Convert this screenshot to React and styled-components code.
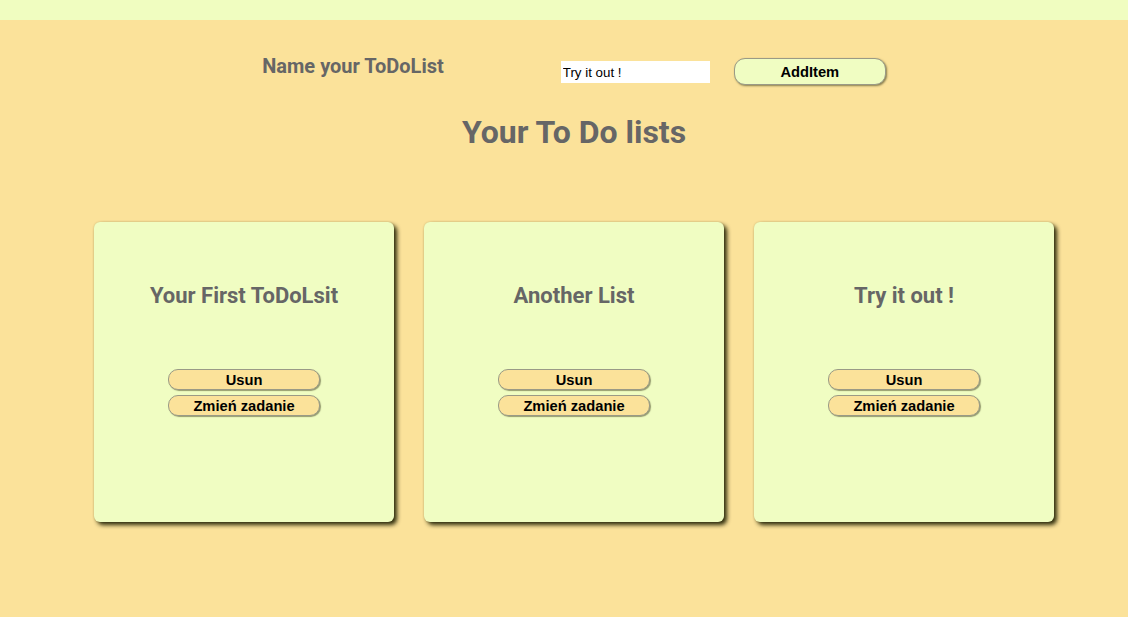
import styled, { createGlobalStyle } from 'styled-components';

const lists = ['Your First ToDoLsit', 'Another List', 'Try it out !'];

export default function App() {
  return (
    <Page>
      <GlobalStyle />
      <TopBar />
      <Main>
        <Header>
          <NameLabel>Name your ToDoList</NameLabel>
          <NameInput defaultValue="Try it out !" />
          <AddButton>AddItem</AddButton>
        </Header>
        <Title>Your To Do lists</Title>
        <Cards>
          {lists.map((name) => (
            <Card key={name}>
              <CardTitle>{name}</CardTitle>
              <CardActions>
                <SmallButton>Usun</SmallButton>
                <SmallButton>Zmień zadanie</SmallButton>
              </CardActions>
            </Card>
          ))}
        </Cards>
      </Main>
    </Page>
  );
}

const GlobalStyle = createGlobalStyle`
  html, body {
    margin: 0;
    padding: 0;
    background: #fbe29a;
  }
  body {
    font-family: Roboto, "Liberation Sans", sans-serif;
  }
`;

const Page = styled.div`
  width: 100%;
  min-height: 617px;
  background: #fbe29a;
`;
const TopBar = styled.div`
  height: 20px;
  background: #f0fdc0;
`;
const Main = styled.div`
  display: flex;
  flex-direction: column;
  align-items: center;
  padding-left: 20px;
`;
const Header = styled.div`
  display: flex;
  align-items: flex-start;
  margin-top: 38px;
`;
const NameLabel = styled.h3`
  margin: 0;
  margin-top: -1px;
  font-family: Roboto, sans-serif;
  font-weight: 700;
  font-size: 20px;
  line-height: 19px;
  color: #666666;
  margin-right: 117px;
`;
const NameInput = styled.input`
  width: 149px;
  height: 22px;
  box-sizing: border-box;
  margin-top: 3px;
  padding: 0 2px;
  border: none;
  outline: none;
  background: #ffffff;
  font-family: "Liberation Sans", Arial, sans-serif;
  font-size: 13.33px;
  color: #000;
  margin-right: 24px;
`;
const AddButton = styled.button`
  width: 152px;
  height: 27px;
  box-sizing: border-box;
  border: 1px solid #9a9a86;
  border-radius: 11px;
  background: #f0fdc2;
  box-shadow: 1px 1px 2px rgba(60, 60, 30, 0.6);
  font-family: "Liberation Sans", Arial, sans-serif;
  font-weight: 700;
  font-size: 14.7px;
  color: #000;
  padding: 0;
`;
const Title = styled.h1`
  margin: 28px 0 0;
  font-family: Roboto, sans-serif;
  font-weight: 700;
  font-size: 32px;
  line-height: 38px;
  color: #666666;
`;
const Cards = styled.div`
  display: flex;
  gap: 30px;
  margin-top: 71px;
`;
const Card = styled.div`
  width: 300px;
  height: 300px;
  box-sizing: border-box;
  background: #f0fdc2;
  border-radius: 6px;
  box-shadow: 3px 3px 4px rgba(35, 35, 5, 0.95), 0 0 2px rgba(120, 100, 40, 0.3);
  display: flex;
  flex-direction: column;
  align-items: center;
  padding-top: 61px;
`;
const CardTitle = styled.h3`
  margin: 0;
  font-family: Roboto, sans-serif;
  font-weight: 700;
  font-size: 22px;
  line-height: 26px;
  color: #666666;
`;
const CardActions = styled.div`
  display: flex;
  flex-direction: column;
  gap: 5px;
  margin-top: 60px;
`;
const SmallButton = styled.button`
  width: 152px;
  height: 21px;
  box-sizing: border-box;
  border: 1px solid #9a9a86;
  border-radius: 10px;
  background: #fbe29a;
  box-shadow: 1px 1px 1px rgba(60, 60, 30, 0.5);
  font-family: "Liberation Sans", Arial, sans-serif;
  font-weight: 700;
  font-size: 14.7px;
  line-height: 21px;
  color: #000;
  padding: 0;
`;
